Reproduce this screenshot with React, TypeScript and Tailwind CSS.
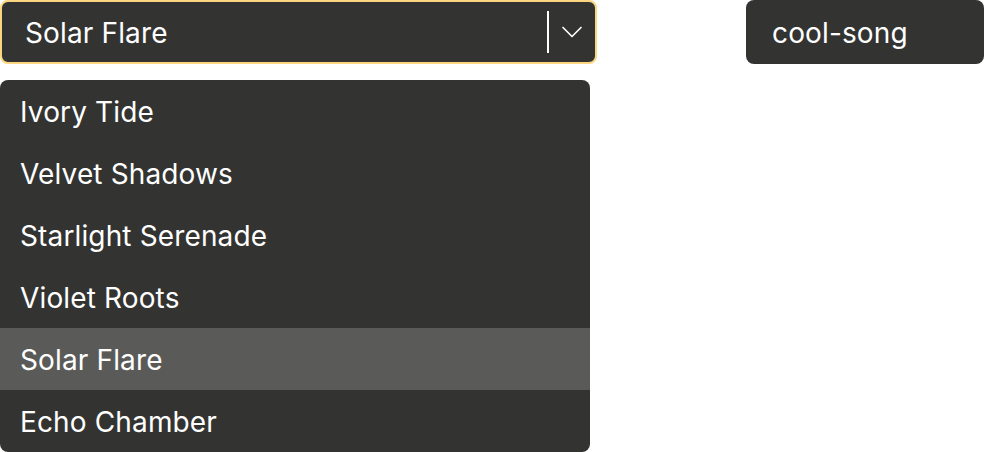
import { ChevronDown } from "lucide-react";

const options = ["Ivory Tide", "Velvet Shadows", "Starlight Serenade", "Violet Roots", "Solar Flare", "Echo Chamber"];

export default function App() {
  const selected = "Solar Flare";
  return (
    <div className="flex h-[452px] w-[984px] items-start justify-between bg-white font-['Inter',sans-serif] text-white">
      <div className="flex w-[597px] flex-col gap-[16px]">
        <div className="flex h-[64px] items-center rounded-[8px] border-2 border-[#fcd581] bg-[#333432] pl-[23px]">
          <span className="flex-1 pt-[2px] text-[28px] tracking-[0.005em]">{selected}</span>
          <span className="h-[42px] w-[2px] bg-white" />
          <span className="flex w-[46px] justify-center">
            <ChevronDown className="h-[36px] w-[36px]" strokeWidth={1.1} />
          </span>
        </div>
        <ul className="w-[590px] overflow-hidden rounded-[8px] bg-[#333432]">
          {options.map((o) => (
            <li
              key={o}
              className={`flex h-[62px] items-center px-[20px] pt-[2px] text-[28px] tracking-[0.005em] ${o === selected ? "bg-[#5a5b58]" : ""}`}
            >
              {o}
            </li>
          ))}
        </ul>
      </div>
      <div className="flex h-[64px] w-[238px] items-center rounded-[8px] bg-[#333432] px-[26px] pt-[2px] text-[28px] tracking-[0.005em]">
        cool-song
      </div>
    </div>
  );
}
